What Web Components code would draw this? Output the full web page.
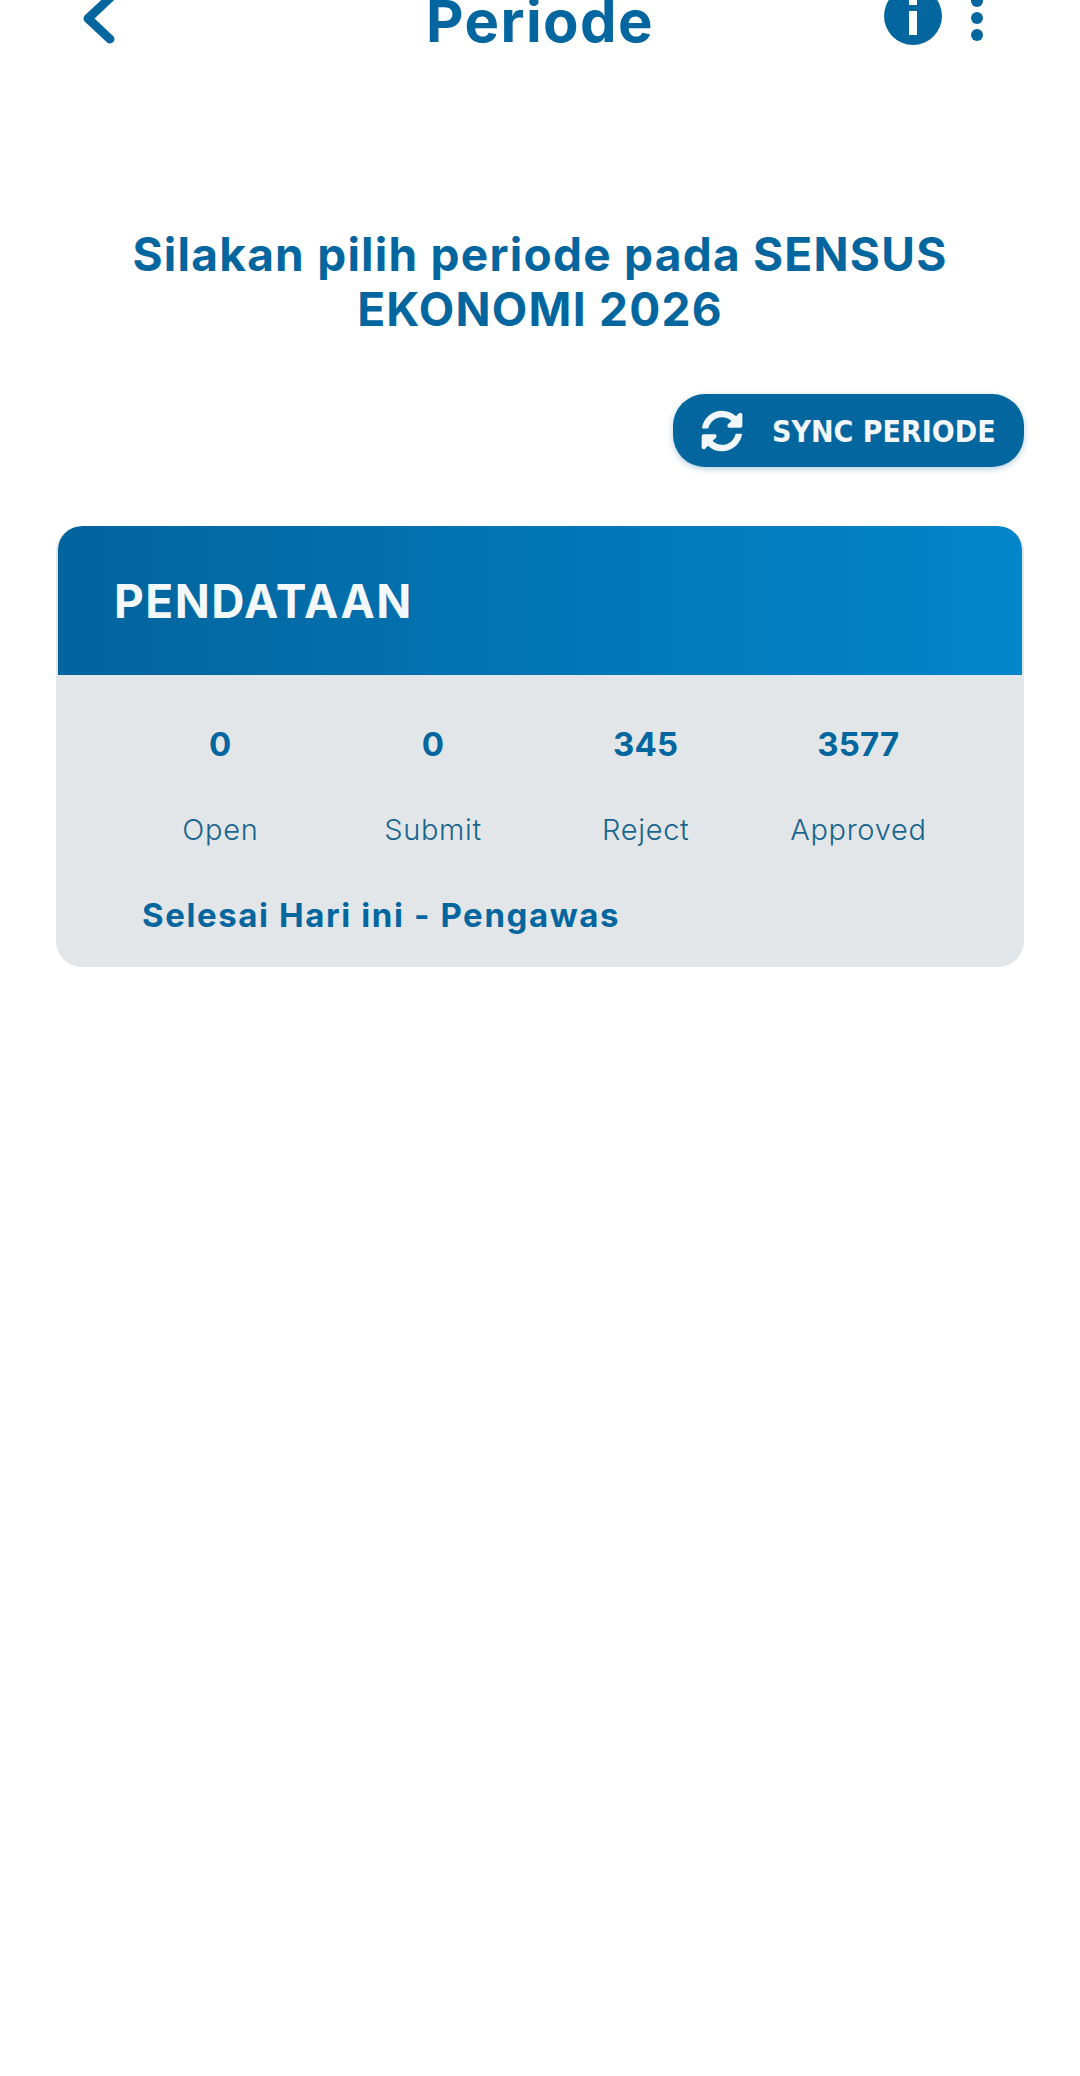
<!DOCTYPE html>
<html lang="id"><head><meta charset="utf-8"><title>Periode</title>
<style>
html,body{margin:0;padding:0;background:#fff;height:2076px;overflow:hidden}
body{font-family:Inter,"Liberation Sans",sans-serif;color:#03669e}
</style></head><body>
<app-bar title-text="Periode"></app-bar>
<main-view></main-view>
<script>
const def=(name,html,cls)=>{
  const t=document.createElement('template');t.innerHTML=html;
  customElements.define(name,class extends HTMLElement{
    constructor(){super();this.attachShadow({mode:'open'}).appendChild(t.content.cloneNode(true));}
    connectedCallback(){cls&&cls(this)}
  });
};
def('app-bar',`<style>
:host{display:grid;grid-template-columns:1fr auto 1fr;grid-template-rows:45px;align-items:end;height:45px;padding:0 97px;box-sizing:border-box;color:#03669e}
.t{font:700 58px/60px Inter,sans-serif;letter-spacing:1.4px;margin-bottom:-6px;white-space:nowrap}
.l{display:flex;align-items:flex-end;margin-left:-19px;margin-bottom:-2px}
.r{display:flex;justify-content:flex-end;align-items:flex-end;gap:29px}
svg{display:block}
</style>
<div class="l"><svg width="40" height="50" viewBox="0 0 40 50"><path d="M32 4 L10 25 L32 46" transform="translate(0,-3) scale(1,.98)" fill="none" stroke="#03669e" stroke-width="9" stroke-linecap="round" stroke-linejoin="round"/></svg></div>
<div class="t" id="t"></div>
<div class="r">
<svg width="58" height="58" viewBox="0 0 58 58"><circle cx="29" cy="29" r="29" fill="#03669e"/><rect x="25" y="24" width="8" height="24" fill="#fff"/><rect x="25" y="10" width="8" height="8" fill="#fff"/></svg>
<svg width="12" height="52" viewBox="0 0 12 52" style="margin-bottom:-2px"><circle cx="6" cy="6" r="6" fill="#03669e"/><circle cx="6" cy="23" r="6" fill="#03669e"/><circle cx="6" cy="40" r="6" fill="#03669e"/></svg>
</div>`,el=>{el.shadowRoot.getElementById('t').textContent=el.getAttribute('title-text')});

def('sync-button',`<style>
:host{display:inline-flex;align-items:center;gap:29px;height:73px;width:351px;box-sizing:border-box;padding:0 0 0 28px;background:#03669e;border-radius:32px;color:#f2f7fb;box-shadow:0 2px 6px rgba(0,90,150,.3)}
svg{display:block;flex:none}
span{font:700 30px/1 "DejaVu Sans Condensed","DejaVu Sans",sans-serif;font-stretch:condensed;letter-spacing:0;white-space:nowrap;display:inline-block;padding-top:2px}
</style>
<svg width="42" height="42" viewBox="0 0 512 512"><path fill="#f2f7fb" d="M370.72 133.28C339.458 104.008 298.888 87.962 255.848 88c-77.458.068-144.328 53.178-162.791 126.85-1.344 5.363-6.122 9.15-11.651 9.15H24.103c-7.498 0-13.194-6.807-11.807-14.176C33.933 94.924 134.813 8 256 8c66.448 0 126.791 26.136 171.315 68.685L463.03 40.97C478.149 25.851 504 36.559 504 57.941V192c0 13.255-10.745 24-24 24H345.941c-21.382 0-32.09-25.851-16.971-40.971l41.75-41.749zM32 296h134.059c21.382 0 32.09 25.851 16.971 40.971l-41.75 41.75c31.262 29.273 71.835 45.319 114.876 45.28 77.418-.07 144.315-53.144 162.787-126.849 1.344-5.363 6.122-9.15 11.651-9.15h57.304c7.498 0 13.194 6.807 11.807 14.176C478.067 417.076 377.187 504 256 504c-66.448 0-126.791-26.136-171.315-68.685L48.97 471.03C33.851 486.149 8 475.441 8 454.059V320c0-13.255 10.745-24 24-24z"/></svg>
<span><slot></slot></span>`);

def('stat-cell',`<style>
:host{display:flex;flex-direction:column;align-items:center;color:#03669e}
.n{font:700 33px/40px Inter,sans-serif;height:40px;letter-spacing:.2px}
.l{font:300 29px/40px Inter,sans-serif;letter-spacing:.7px;color:#19658f;margin-top:46px}
</style><div class="n" id="n"></div><div class="l" id="l"></div>`,el=>{
 el.shadowRoot.getElementById('n').textContent=el.getAttribute('value');
 el.shadowRoot.getElementById('l').textContent=el.getAttribute('label');});

def('period-card',`<style>
:host{display:block;width:968px;background:#e2e6e8;border-radius:26px;overflow:hidden;margin-left:56px}
.h{margin:0 2px;height:149px;padding-left:56px;box-sizing:border-box;display:flex;align-items:center;background:linear-gradient(90deg,#02649d,#0286cb);color:#f3f8fb;font:700 46px/1 Inter,sans-serif;letter-spacing:1.5px;border-radius:24px 24px 0 0}
.s{display:grid;grid-template-columns:repeat(4,212.7px);padding:49px 58px 0}
.f{font:700 33px/40px Inter,sans-serif;letter-spacing:1.6px;padding:45px 0 32px 86px;color:#03669e}
</style>
<div class="h"><slot name="head"></slot></div>
<div class="s"><slot name="stat"></slot></div>
<div class="f"><slot name="foot"></slot></div>`);

def('main-view',`<style>
:host{display:block}
h1{margin:0;padding-top:182px;text-align:center;font:700 46px/55px Inter,sans-serif;letter-spacing:1.25px;color:#03669e}
.a{display:flex;justify-content:flex-end;padding:57px 56px 0 0}
.c{display:block;margin-top:59px}
</style>
<h1>Silakan pilih periode pada SENSUS<br>EKONOMI 2026</h1>
<div class="a"><sync-button>SYNC PERIODE</sync-button></div>
<div class="c"><period-card>
<span slot="head">PENDATAAN</span>
<stat-cell slot="stat" value="0" label="Open"></stat-cell>
<stat-cell slot="stat" value="0" label="Submit"></stat-cell>
<stat-cell slot="stat" value="345" label="Reject"></stat-cell>
<stat-cell slot="stat" value="3577" label="Approved"></stat-cell>
<span slot="foot">Selesai Hari ini - Pengawas</span>
</period-card></div>`);
</script>
</body></html>
